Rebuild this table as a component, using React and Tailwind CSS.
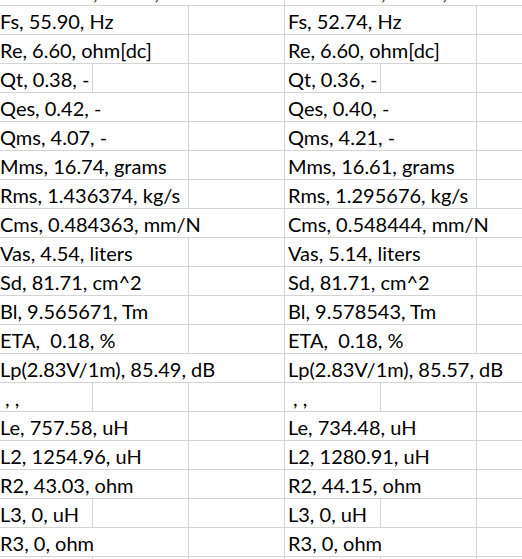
import * as React from "react"

// a = line at col A/B, b = B/C, d = D/E, e = E/F
const rows = [
  { l: "", r: "", a: false, b: false, d: false, e: false, head: true },
  { l: "Fs, 55.90, Hz", r: "Fs, 52.74, Hz", a: false, b: true, d: false, e: true },
  { l: "Re, 6.60, ohm[dc]", r: "Re, 6.60, ohm[dc]", a: false, b: true, d: false, e: true },
  { l: "Qt, 0.38, -", r: "Qt, 0.36, -", a: true, b: true, d: true, e: true },
  { l: "Qes, 0.42, -", r: "Qes, 0.40, -", a: false, b: true, d: false, e: true },
  { l: "Qms, 4.07, -", r: "Qms, 4.21, -", a: false, b: true, d: false, e: true },
  { l: "Mms, 16.74, grams", r: "Mms, 16.61, grams", a: false, b: true, d: false, e: true },
  { l: "Rms, 1.436374, kg/s", r: "Rms, 1.295676, kg/s", a: false, b: true, d: false, e: true },
  { l: "Cms, 0.484363, mm/N", r: "Cms, 0.548444, mm/N", a: false, b: false, d: false, e: false },
  { l: "Vas, 4.54, liters", r: "Vas, 5.14, liters", a: false, b: true, d: false, e: true },
  { l: "Sd, 81.71, cm^2", r: "Sd, 81.71, cm^2", a: false, b: true, d: false, e: true },
  { l: "Bl, 9.565671, Tm", r: "Bl, 9.578543, Tm", a: false, b: true, d: false, e: true },
  { l: "ETA,  0.18, %", r: "ETA,  0.18, %", a: false, b: true, d: false, e: true },
  { l: "Lp(2.83V/1m), 85.49, dB", r: "Lp(2.83V/1m), 85.57, dB", a: false, b: false, d: false, e: false },
  { l: " , ,", r: " , ,", a: true, b: true, d: true, e: true },
  { l: "Le, 757.58, uH", r: "Le, 734.48, uH", a: false, b: true, d: false, e: true },
  { l: "L2, 1254.96, uH", r: "L2, 1280.91, uH", a: false, b: true, d: false, e: true },
  { l: "R2, 43.03, ohm", r: "R2, 44.15, ohm", a: false, b: true, d: false, e: true },
  { l: "L3, 0, uH", r: "L3, 0, uH", a: true, b: true, d: true, e: true },
  { l: "R3, 0, ohm", r: "R3, 0, ohm", a: false, b: true, d: false, e: true },
  { l: "", r: "", a: true, b: true, d: true, e: true },
]

function Commas() {
  return (
    <span className="whitespace-pre">
      <span className="inline-block w-[93px]" />,<span className="inline-block w-[57px]" />,
    </span>
  )
}

function Cell({ text, line, head }) {
  return (
    <div
      className={
        "w-[96px] shrink-0 h-full flex items-end pl-[3px] pb-[1px] whitespace-pre " +
        (line ? "border-r border-[#d4d4d4]" : "border-r border-transparent")
      }
    >
      {head ? <Commas /> : text}
    </div>
  )
}

export default function App() {
  return (
    <div
      className="w-[522px] h-[559px] overflow-hidden bg-white text-black text-[20px] leading-[24px]"
      style={{ fontFamily: "Lato, 'Open Sans', sans-serif" }}
    >
      <div className="-mt-[23px] -ml-[3px]">
        {rows.map((row, i) => (
          <div key={i} className="flex h-[29px] border-b border-[#d4d4d4]">
            <Cell text={row.l} line={row.a} head={row.head} />
            <Cell line={row.b} />
            <Cell line={true} />
            <Cell text={row.r} line={row.d} head={row.head} />
            <Cell line={row.e} />
            <Cell line={true} />
          </div>
        ))}
      </div>
    </div>
  )
}
